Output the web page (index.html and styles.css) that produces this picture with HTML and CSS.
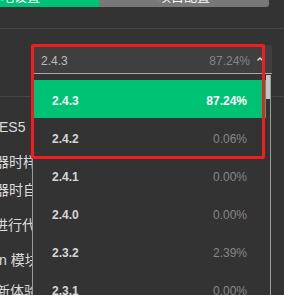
FILE: index.html
```html
<!DOCTYPE html>
<html lang="en">
<head>
  <meta charset="UTF-8" />
  <title>基础库版本</title>
  <link rel="stylesheet" href="styles.css">
</head>
<body>

  <!-- Tabs (scrolled, only the bottom edge shows) -->
  <div class="tabs">
    <div class="tab tab-on">本地设置</div>
    <div class="tab tab-off">项目配置</div>
  </div>
  <div class="toolbar"></div>

  <!-- Library version select -->
  <div class="select-row">
    <div class="select">
      <span class="sel-name">2.4.3</span>
      <span class="sel-pct">87.24%</span>
      <svg class="caret" width="6" height="4" viewBox="0 0 6 4">
        <path d="M0.5 3.5 L3 1 L5.5 3.5" fill="none" stroke="#e6e6e6" stroke-width="1.3"/>
      </svg>
    </div>
  </div>

  <div class="divider"></div>

  <!-- Settings behind the dropdown -->
  <div class="items">
    <div class="item"><span class="shift-1">ES5</span></div>
    <div class="item short"><span class="shift-5">器时样式补全</span></div>
    <div class="item"><span class="shift-5">器时自动压缩</span></div>
    <div class="item"><span class="shift-6">进行代码保护</span></div>
    <div class="item mid"><span class="shift-1">n 模块化</span></div>
    <div class="item last"><span class="shift-4">新体验</span></div>
  </div>

  <!-- Dropdown menu -->
  <div class="menu">
    <div class="thumb"></div>
    <div class="opt active"><span>2.4.3</span><span class="pct">87.24%</span></div>
    <div class="opt"><span>2.4.2</span><span class="pct">0.06%</span></div>
    <div class="opt"><span>2.4.1</span><span class="pct">0.00%</span></div>
    <div class="opt"><span>2.4.0</span><span class="pct">0.00%</span></div>
    <div class="opt"><span>2.3.2</span><span class="pct">2.39%</span></div>
    <div class="opt"><span>2.3.1</span><span class="pct">0.00%</span></div>
  </div>

  <!-- Red highlight frame -->
  <div class="highlight"></div>

</body>
</html>
```

FILE: styles.css
```css
/* Page */
body {
  margin: 0;
  width: 284px;
  height: 295px;
  overflow: hidden;
  position: relative;
  background: #333333;
  font-family: "Liberation Sans", "Noto Sans CJK SC", sans-serif;
  color: #dcdcdc;
}
/* Tabs */
.tabs {
  display: flex;
  align-items: flex-end;
  height: 7px;
  overflow: hidden;
}
.tab {
  flex: none;
  height: 20px;
  line-height: 20px;
  font-size: 13px;
  color: #fff;
  text-align: center;
}
.tab-on {
  width: 170px;
  margin-left: -71px;
  background: #00c275;
}
.tab-off {
  width: 170px;
  background: #787878;
  border-bottom-right-radius: 3px;
}
.toolbar {
  height: 21px;
  border-bottom: 1px solid #474747;
}
/* Select */
.select-row {
  padding: 16px 0 0 32px;
}
.select {
  width: 240px;
  height: 29px;
  box-sizing: border-box;
  display: flex;
  align-items: center;
  padding: 3px 9px 0 9px;
  background: #3f3f3f;
  border-radius: 3px 3px 0 0;
  border-bottom: 1px solid #a8a8a8;
  font-size: 12px;
}
.sel-name {
  flex: 1;
  color: #bdbdbd;
}
.sel-pct {
  color: #858585;
}
.caret {
  margin-left: 7px;
  margin-bottom: 3px;
}
.divider {
  margin-top: 22px;
  height: 1px;
  background: #464646;
}
/* Settings list */
.items {
  font-size: 14px;
  white-space: nowrap;
}
.item {
  height: 35px;
  line-height: 20px;
}
.item:first-child {
  margin-top: 20px;
}
.item.short { height: 28px; }
.item.mid { height: 31px; }
.item.last { height: 14px; overflow: hidden; }
.shift-1 { margin-left: -1px; }
.shift-4 { margin-left: -4px; }
.shift-5 { margin-left: -5px; }
.shift-6 { margin-left: -6px; }
.item span { display: inline-block; }
/* Dropdown menu */
.menu {
  position: absolute;
  top: 75px;
  left: 32px;
  width: 239px;
  bottom: 0;
  overflow: hidden;
  box-sizing: border-box;
  padding: 5px 4px 0 1px;
  background: #333333;
  border-left: 1px solid #9c9c9c;
  border-right: 1px solid #9c9c9c;
}
.thumb {
  position: absolute;
  top: 0;
  right: 0;
  width: 4px;
  height: 24px;
  background: #c6c6c6;
}
.opt {
  height: 38px;
  box-sizing: border-box;
  display: flex;
  align-items: center;
  justify-content: space-between;
  padding: 3px 19px 0 18px;
  font-size: 12px;
  font-weight: bold;
  color: #d6d6d6;
}
.opt .pct {
  font-weight: normal;
  color: #878787;
}
.opt.active {
  background: #00c275;
  color: #f4f4f4;
}
.opt.active .pct {
  font-weight: bold;
  color: #fff;
}
/* Red annotation frame */
.highlight {
  position: absolute;
  top: 44px;
  left: 31px;
  width: 234px;
  height: 115px;
  box-sizing: border-box;
  border: 3px solid #f41c1c;
  border-radius: 2px;
}
```
